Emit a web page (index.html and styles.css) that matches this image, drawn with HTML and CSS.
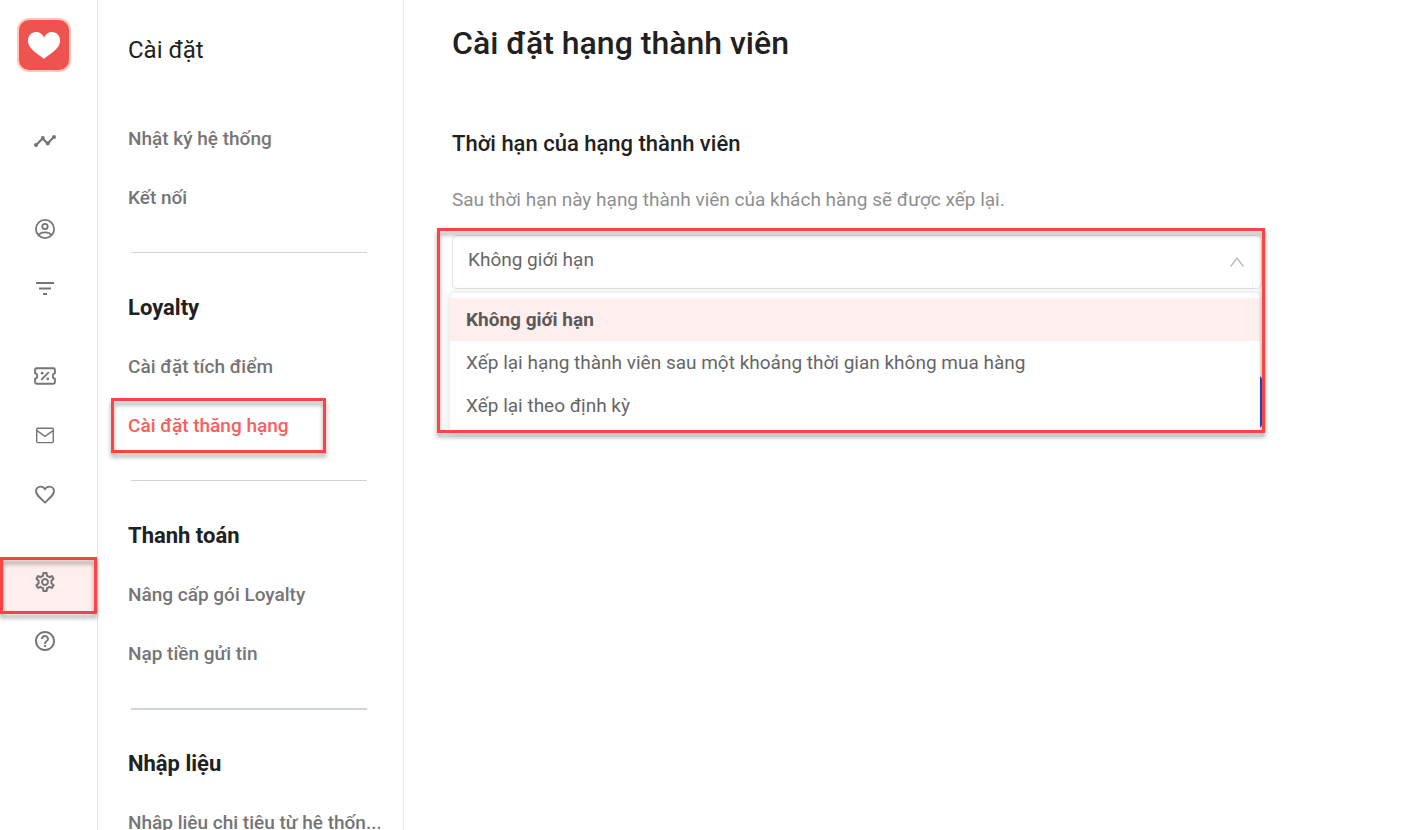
FILE: index.html
```html
<!DOCTYPE html>
<html lang="vi">
<head>
<meta charset="utf-8">
<title>Cài đặt hạng thành viên</title>
<link rel="stylesheet" href="styles.css">
</head>
<body>
<div class="app">
  <nav class="rail">
    <a class="logo" href="#">
      <svg width="54" height="54" viewBox="0 0 54 54"><rect x="1" y="1" width="52" height="52" rx="11" fill="#ef5350" stroke="#ffc9b9" stroke-width="2"/><path fill="#fff" d="M27 41C24 37.500 11 32 11 22.500C11 17.500 14.500 14 19 14C22.500 14 25.500 16 27 19.500C28.500 16 31.500 14 35 14C39.500 14 43 17.500 43 22.500C43 32 30 37.500 27 41Z"/></svg>
    </a>
    <div class="rail-group">
      <a class="rail-item" href="#"><svg class="icon" viewBox="0 0 24 24"><path fill="none" stroke="currentColor" stroke-width="2.200" d="M3 16.300L9.500 9.500L14.700 14.500L21 7.800"/><g fill="currentColor"><circle cx="3" cy="16" r="2"/><circle cx="9.800" cy="9" r="2"/><circle cx="14.700" cy="14.500" r="2"/><circle cx="21" cy="8" r="2"/></g></svg></a>
    </div>
    <div class="rail-group">
      <a class="rail-item" href="#"><svg class="icon" viewBox="0 0 24 24" fill="none" stroke="currentColor" stroke-width="1.800"><circle cx="12" cy="12" r="9.100"/><circle cx="12" cy="9.500" r="2.700"/><path d="M5.500 18C7 16 9.500 15.400 12 15.400S17 16 18.500 18"/></svg></a>
      <a class="rail-item" href="#"><svg class="icon" viewBox="0 0 24 24" fill="currentColor"><path d="M3 6h18v2H3zM6 11.500h12v2H6zM10 17h4v2h-4z"/></svg></a>
    </div>
    <div class="rail-group">
      <a class="rail-item" href="#"><svg class="icon" viewBox="0 0 24 24" fill="none" stroke="currentColor" stroke-width="1.900"><path d="M3.500 4.300H20.500Q21.900 4.300 21.900 5.700V9.200A2.900 2.900 0 0 0 21.900 14.800V18.300Q21.900 19.700 20.500 19.700H3.500Q2.100 19.700 2.100 18.300V14.800A2.900 2.900 0 0 0 2.100 9.200V5.700Q2.100 4.300 3.500 4.300Z"/><path d="M8.200 15.800L15.800 8.200"/><g fill="currentColor" stroke="none"><circle cx="9.200" cy="9.200" r="1.400"/><circle cx="14.800" cy="14.800" r="1.400"/></g></svg></a>
      <a class="rail-item" href="#"><svg class="icon" viewBox="0 0 24 24" fill="none" stroke="currentColor" stroke-width="1.400"><rect x="3.700" y="5.300" width="16.600" height="14.300" rx="1"/><path d="M4 7.600L12 13.300L20 7.600"/></svg></a>
      <a class="rail-item" href="#"><svg class="icon" viewBox="0 0 24 24" fill="none" stroke="currentColor" stroke-width="1.900"><path d="M12 20.500C6 15.100 3 12.700 3 9.100C3 6.500 5 4.600 7.500 4.600C9.300 4.600 11 5.500 12 7.100C13 5.500 14.700 4.600 16.500 4.600C19 4.600 21 6.500 21 9.100C21 12.700 18 15.100 12 20.500Z"/></svg></a>
    </div>
    <div class="rail-group">
      <a class="rail-item rail-item-active marked" href="#"><svg class="icon" viewBox="0 0 24 24" fill="currentColor"><path d="M19.430 12.980c.04-.32.07-.64.07-.98s-.03-.66-.07-.98l2.110-1.650c.19-.15.24-.42.12-.64l-2-3.460c-.09-.16-.26-.25-.44-.25-.06 0-.12.010-.17.030l-2.490 1c-.52-.4-1.080-.73-1.690-.98l-.38-2.650C14.460 2.180 14.250 2 14 2h-4c-.25 0-.46.18-.49.42l-.38 2.650c-.61.25-1.170.59-1.690.98l-2.490-1c-.06-.02-.12-.03-.18-.03-.17 0-.34.090-.43.250l-2 3.460c-.13.220-.07.490.12.640l2.110 1.650c-.04.320-.07.650-.07.980s.03.660.07.980l-2.110 1.650c-.19.150-.24.420-.12.640l2 3.460c.09.160.26.250.44.250.06 0 .12-.01.170-.03l2.490-1c.52.400 1.080.730 1.690.980l.38 2.650c.03.240.24.420.49.420h4c.25 0 .46-.18.490-.42l.38-2.650c.61-.25 1.170-.59 1.690-.98l2.490 1c.06.020.12.030.18.030.17 0 .34-.09.430-.25l2-3.460c.12-.22.07-.49-.12-.64l-2.110-1.650zm-1.980-1.710c.04.310.05.520.05.730s-.02.430-.05.730l-.14 1.130.89.700 1.080.84-.7 1.210-1.270-.51-1.040-.42-.9.680c-.43.320-.84.560-1.250.730l-1.060.43-.16 1.130-.2 1.350h-1.400l-.19-1.350-.16-1.130-1.060-.43c-.43-.18-.83-.41-1.230-.71l-.91-.7-1.060.43-1.270.51-.7-1.210 1.080-.84.890-.7-.14-1.130c-.03-.31-.05-.54-.05-.74s.02-.43.050-.73l.14-1.130-.89-.7-1.080-.84.700-1.210 1.270.51 1.040.42.900-.68c.43-.32.840-.56 1.250-.73l1.060-.43.160-1.130.2-1.350h1.390l.19 1.350.16 1.130 1.060.43c.43.180.83.410 1.230.71l.91.700 1.060-.43 1.270-.51.700 1.210-1.070.850-.89.700.14 1.130zM12 8c-2.210 0-4 1.790-4 4s1.790 4 4 4 4-1.790 4-4-1.790-4-4-4zm0 6c-1.100 0-2-.9-2-2s.9-2 2-2 2 .9 2 2-.9 2-2 2z"/></svg></a>
      <a class="rail-item" href="#"><svg class="icon" viewBox="0 0 24 24" fill="currentColor"><path d="M11 18h2v-2h-2v2zm1-16C6.480 2 2 6.480 2 12s4.480 10 10 10 10-4.480 10-10S17.520 2 12 2zm0 18c-4.410 0-8-3.590-8-8s3.590-8 8-8 8 3.590 8 8-3.590 8-8 8zm0-14c-2.210 0-4 1.790-4 4h2c0-1.100.9-2 2-2s2 .9 2 2c0 2-3 1.750-3 5h2c0-2.250 3-2.500 3-5 0-2.210-1.790-4-4-4z"/></svg></a>
    </div>
  </nav>

  <aside class="menu">
    <h2 class="menu-title">Cài đặt</h2>
    <a class="menu-link" href="#"><span class="menu-text">Nhật ký hệ thống</span></a>
    <a class="menu-link" href="#"><span class="menu-text">Kết nối</span></a>
    <hr class="divider">
    <h3 class="menu-heading">Loyalty</h3>
    <a class="menu-link" href="#"><span class="menu-text">Cài đặt tích điểm</span></a>
    <a class="menu-link menu-link-active marked" href="#"><span class="menu-text">Cài đặt thăng hạng</span></a>
    <hr class="divider">
    <h3 class="menu-heading">Thanh toán</h3>
    <a class="menu-link" href="#"><span class="menu-text">Nâng cấp gói Loyalty</span></a>
    <a class="menu-link" href="#"><span class="menu-text">Nạp tiền gửi tin</span></a>
    <hr class="divider divider-thick">
    <h3 class="menu-heading">Nhập liệu</h3>
    <a class="menu-link" href="#"><span class="menu-text">Nhập liệu chi tiêu từ hệ thốn...</span></a>
  </aside>

  <main class="content">
    <h1 class="page-title">Cài đặt hạng thành viên</h1>
    <h2 class="section-title" id="term-label">Thời hạn của hạng thành viên</h2>
    <p class="hint">Sau thời hạn này hạng thành viên của khách hàng sẽ được xếp lại.</p>
    <div class="field marked">
      <select class="select" aria-labelledby="term-label">
        <option>Không giới hạn</option>
        <option>Xếp lại hạng thành viên sau một khoảng thời gian không mua hàng</option>
        <option>Xếp lại theo định kỳ</option>
      </select>
      <svg class="arrow" viewBox="0 0 14 10"><path fill="none" stroke="#bfbfbf" stroke-width="1.500" d="M.6 9.500L7 1.200L13.400 9.500"/></svg>
      <ul class="options" role="listbox" aria-labelledby="term-label">
        <li class="option option-selected" role="option" aria-selected="true">Không giới hạn</li>
        <li class="option" role="option" aria-selected="false">Xếp lại hạng thành viên sau một khoảng thời gian không mua hàng</li>
        <li class="option" role="option" aria-selected="false">Xếp lại theo định kỳ</li>
      </ul>
    </div>
    <div class="actions"><button class="submit" type="button"></button></div>
  </main>
</div>
</body>
</html>
```
FILE: styles.css
```css
* { box-sizing: border-box; }

body {
  margin: 0;
  background: #fff;
  color: #212121;
  font-family: Roboto, "Noto Sans", sans-serif;
}

h1, h2, h3, p, ul { margin: 0; padding: 0; }
a { color: inherit; text-decoration: none; }

.app {
  display: flex;
  height: 100vh;
  overflow: hidden;
}

/* Icon rail */
.rail {
  flex: none;
  width: 98px;
  border-right: 1px solid #e3e3e3;
  color: #757575;
}

.logo {
  display: block;
  height: 88px;
  padding: 18px 0 0 17px;
}

.logo svg { display: block; }
.rail-group { padding-top: 29px; }

.rail-item {
  display: block;
  height: 53px;
  margin-bottom: 6px;
  padding: 12px 0 0 33px;
}

.rail-item-active { background: #ffeeee; }

.icon {
  display: block;
  width: 24px;
  height: 24px;
}

/* Red callout frame */
.marked { position: relative; }

.marked::after {
  content: "";
  position: absolute;
  z-index: 3;
  border: 3px solid #ff4242;
  filter: drop-shadow(0 4px 2px rgba(0, 0, 0, 0.35));
  pointer-events: none;
}

.rail-item-active::after { inset: -1px 0 -3px; }

/* Settings menu */
.menu {
  flex: none;
  width: 306px;
  padding: 0 23px 0 30px;
  border-right: 1px solid #e8e8e8;
}

.menu-title {
  height: 109px;
  padding-top: 34px;
  font-size: 24px;
  line-height: 32px;
  font-weight: 400;
}

.menu-heading {
  font-size: 22px;
  line-height: 59px;
  font-weight: 700;
}

.menu-link {
  display: block;
  color: #757575;
  font-size: 19px;
  line-height: 59px;
  font-weight: 500;
}

.menu-text {
  display: block;
  overflow: hidden;
  white-space: nowrap;
}

.menu-link-active { color: #ff5c5c; }
.menu-link-active::after { inset: 2px 54px 2px -17px; }

.divider {
  height: 1px;
  margin: 25px 13px 25px 3px;
  border: 0;
  background: #cfd4e0;
}

.divider-thick {
  height: 2px;
  margin-bottom: 24px;
}

/* Main content */
.content {
  flex: 1;
  min-width: 0;
  padding: 23px 143px 0 48px;
}

.page-title {
  font-size: 32px;
  line-height: 40px;
  font-weight: 500;
}

.section-title {
  margin-top: 65px;
  font-size: 22px;
  line-height: 32px;
  font-weight: 500;
}

.hint {
  margin-top: 28px;
  color: #8f8f8f;
  font-size: 19px;
  line-height: 24px;
  font-weight: 400;
}

.field { margin-top: 23px; }
.field::after { inset: -7px -3px -144px -15px; }

.select {
  display: block;
  width: 100%;
  height: 54px;
  padding: 0 44px 6px 15px;
  border: 1px solid #dfe3ea;
  border-radius: 5px;
  background: #fff;
  color: #666;
  font-family: inherit;
  font-size: 19px;
  font-weight: 400;
  appearance: none;
}

.arrow {
  position: absolute;
  top: 22px;
  right: 18px;
  width: 14px;
  height: 10px;
}

.options {
  position: absolute;
  z-index: 2;
  top: 58px;
  right: 2px;
  left: -2px;
  height: 140px;
  padding-top: 5px;
  border-radius: 5px 5px 0 0;
  background: #fff;
  box-shadow: 0 0 8px rgba(0, 0, 0, 0.15);
  list-style: none;
}

.option {
  padding-left: 16px;
  color: #666;
  font-size: 19px;
  line-height: 43px;
  font-weight: 400;
}

.option-selected {
  background: #ffeeee;
  color: #595959;
  font-weight: 700;
}

.actions {
  display: flex;
  justify-content: flex-end;
  margin-top: 87px;
}

.submit {
  width: 120px;
  height: 52px;
  border: 0;
  border-radius: 4px;
  background: #2353d8;
}
```
